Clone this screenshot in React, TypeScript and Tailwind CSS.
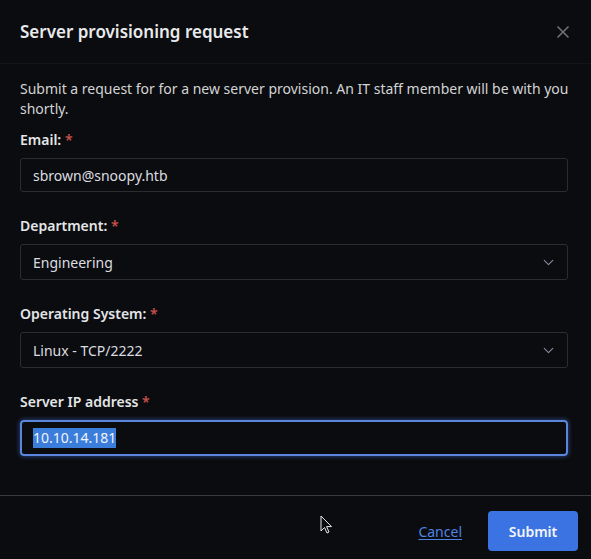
import { X, ChevronDown } from 'lucide-react';

const fields = [
  { label: 'Email:', value: 'sbrown@snoopy.htb', kind: 'input' },
  { label: 'Department:', value: 'Engineering', kind: 'select' },
  { label: 'Operating System:', value: 'Linux - TCP/2222', kind: 'select' },
];

export default function App() {
  return (
    <div
      className="relative w-[591px] h-[559px] bg-[#0b0c0f] text-[#e4e5e7] overflow-hidden"
      style={{ fontFamily: '"Noto Sans", "Open Sans", sans-serif' }}
    >
      {/* Header */}
      <div className="h-[64px] flex items-center justify-between pl-5 pr-[18px] border-b border-[#121418]">
        <h2 className="text-[17px] font-semibold text-[#e9eaec]">
          Server provisioning request
        </h2>
        <X className="w-[20px] h-[20px] text-[#707176]" strokeWidth={2} />
      </div>

      {/* Body */}
      <div className="pl-5 pr-[23px] pt-[15px] h-[431px]">
        <p className="text-[14px] leading-[20px] text-[#d3d4d6] -mr-[10px]">
          Submit a request for for a new server provision. An IT staff member will be with you shortly.
        </p>

        {fields.map((f, i) => (
          <div key={f.label} className={i === 0 ? 'mt-[11px]' : 'mt-[24px]'}>
            <label className="block text-[14px] leading-[20px] font-semibold text-[#e4e5e7]">
              {f.label} <span className="text-[#c9504b]">*</span>
            </label>
            <div
              className={`mt-[8px] flex items-center justify-between pl-3 pr-[10px] border border-[#2b2c30] rounded-[3px] bg-[#0b0c0f] ${
                f.kind === 'input' ? 'h-[34px]' : 'h-[36px]'
              }`}
            >
              <span className="text-[14px] text-[#dcdde0]">{f.value}</span>
              {f.kind === 'select' && (
                <ChevronDown className="w-[17px] h-[17px] text-[#8a8fa0]" strokeWidth={1.5} />
              )}
            </div>
          </div>
        ))}

        <div className="mt-[24px]">
          <label className="block text-[14px] leading-[20px] font-semibold text-[#e4e5e7]">
            Server IP address <span className="text-[#c9504b]">*</span>
          </label>
          <div className="mt-[8px] h-[36px] flex items-center px-3 border-2 border-[#5a86dd] rounded-[4px] shadow-[0_0_4px_1px_rgba(70,120,220,0.45)]">
            <span className="text-[14px] leading-[20px] bg-[#3b7ddb] text-[#f2f4f8] -ml-px">10.10.14.181</span>
          </div>
        </div>
      </div>

      {/* Footer */}
      <div className="h-[64px] pt-[7px] border-t border-[#3a3b3f] flex items-center justify-end gap-[26px] pr-[13px]">
        <a className="text-[14px] text-[#4f83e3] underline underline-offset-2">Cancel</a>
        <button className="w-[90px] h-[40px] rounded-[4px] bg-[#3b74e2] text-[14px] font-semibold text-[#f3f5f9]">
          Submit
        </button>
      </div>

      {/* mouse pointer */}
      <svg className="absolute left-[320px] top-[515px]" width="14" height="20" viewBox="0 0 14 20">
        <path d="M1 1 L1 16 L4.5 12.5 L7 18 L9 17 L6.6 11.6 L11.5 11.6 Z" fill="#0b0c0f" stroke="#e8e8e8" strokeWidth="1" />
      </svg>
    </div>
  );
}
